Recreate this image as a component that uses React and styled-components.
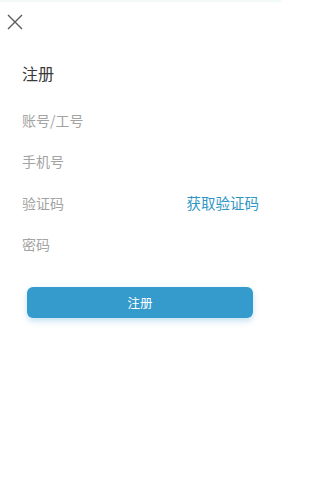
import styled, { createGlobalStyle } from "styled-components";

const Global = createGlobalStyle`
  html, body { margin: 0; padding: 0; background: #fff; }
  body { font-family: "Noto Sans CJK SC", "Noto Sans", sans-serif; }
`;

const Page = styled.div`
  width: 281px;
  height: 500px;
  background: #fff;
  border-top: 2px solid #f2faf8;
  box-sizing: border-box;
`;

const Close = styled.button`
  display: block;
  margin: 11px 0 0 6px;
  padding: 0;
  border: 0;
  background: none;
  width: 18px;
  height: 18px;
`;

const Form = styled.div`
  padding: 0 22px;
`;

const Title = styled.h1`
  margin: 30px 0 14px;
  font-size: 16px;
  font-weight: 400;
  color: #3a3a3a;
  line-height: 24px;
`;

const Row = styled.div`
  display: flex;
  align-items: center;
  justify-content: space-between;
  height: 41.5px;
`;

const Label = styled.span`
  font-size: 14px;
  color: #a3a3a3;
`;

const CodeLink = styled.a`
  font-size: 14.5px;
  color: #2f96c4;
  text-decoration: none;
`;

const Submit = styled.button`
  display: block;
  width: 226px;
  height: 31px;
  margin: 22px 0 0 5px;
  border: 0;
  border-radius: 6px;
  background: #359bcc;
  color: #fff;
  font-family: inherit;
  font-size: 12.5px;
  box-shadow: 0 3px 6px rgba(53, 155, 204, 0.3);
`;

const fields = ["账号/工号", "手机号", "验证码", "密码"];

export default function App() {
  return (
    <Page>
      <Global />
      <Close aria-label="close">
        <svg width="18" height="18" viewBox="0 0 18 18">
          <path d="M2 2 L16 16 M16 2 L2 16" stroke="#5a5a5a" strokeWidth="1.4" fill="none" />
        </svg>
      </Close>
      <Form>
        <Title>注册</Title>
        {fields.map((f) => (
          <Row key={f}>
            <Label>{f}</Label>
            {f === "验证码" && <CodeLink href="#">获取验证码</CodeLink>}
          </Row>
        ))}
        <Submit>注册</Submit>
      </Form>
    </Page>
  );
}
